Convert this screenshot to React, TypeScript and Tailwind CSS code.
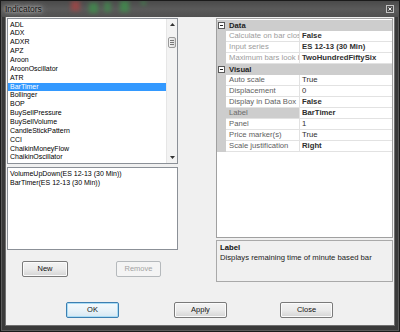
import React from "react";

const indicators = [
  "ADL",
  "ADX",
  "ADXR",
  "APZ",
  "Aroon",
  "AroonOscillator",
  "ATR",
  "BarTimer",
  "Bollinger",
  "BOP",
  "BuySellPressure",
  "BuySellVolume",
  "CandleStickPattern",
  "CCI",
  "ChaikinMoneyFlow",
  "ChaikinOscillator",
];

const applied = ["VolumeUpDown(ES 12-13 (30 Min))", "BarTimer(ES 12-13 (30 Min))"];

type Row =
  | { kind: "cat"; label: string }
  | {
      kind: "prop";
      name: string;
      value: string;
      disabled?: boolean;
      bold?: boolean;
      selected?: boolean;
    };

const rows: Row[] = [
  { kind: "cat", label: "Data" },
  { kind: "prop", name: "Calculate on bar close", value: "False", disabled: true, bold: true },
  { kind: "prop", name: "Input series", value: "ES 12-13 (30 Min)", disabled: true, bold: true },
  { kind: "prop", name: "Maximum bars look back", value: "TwoHundredFiftySix", disabled: true, bold: true },
  { kind: "cat", label: "Visual" },
  { kind: "prop", name: "Auto scale", value: "True" },
  { kind: "prop", name: "Displacement", value: "0" },
  { kind: "prop", name: "Display in Data Box", value: "False", bold: true },
  { kind: "prop", name: "Label", value: "BarTimer", bold: true, selected: true },
  { kind: "prop", name: "Panel", value: "1" },
  { kind: "prop", name: "Price marker(s)", value: "True" },
  { kind: "prop", name: "Scale justification", value: "Right", bold: true },
];

function Btn({ label, variant, w }: { label: string; variant: "normal" | "default" | "disabled"; w: string }) {
  if (variant === "disabled") {
    return (
      <div
        className={`${w} h-[16px] flex items-center justify-center text-[7.5px] rounded-[2px] border border-[#b5b9bc] bg-[#f4f4f4] text-[#a3a3a3]`}
      >
        {label}
      </div>
    );
  }
  if (variant === "default") {
    return (
      <div
        className={`${w} h-[16px] flex items-center justify-center text-[7.5px] rounded-[2px] border border-[#3c7fb1] bg-gradient-to-b from-[#f4fafd] via-[#e9f3f9] to-[#d6e8f3] text-[#111] shadow-[inset_0_0_0_1px_#a9dcf5]`}
      >
        {label}
      </div>
    );
  }
  return (
    <div
      className={`${w} h-[16px] flex items-center justify-center text-[7.5px] rounded-[2px] border border-[#7a7a7a] bg-gradient-to-b from-[#f3f3f3] via-[#ebebeb] to-[#d4d4d4] text-[#111] shadow-[inset_0_0_0_1px_#fbfbfb]`}
    >
      {label}
    </div>
  );
}

function MinusBox() {
  return (
    <svg width="7" height="7" viewBox="0 0 7 7" className="block">
      <rect x="0.5" y="0.5" width="6" height="6" fill="#fff" stroke="#5a5a5a" />
      <line x1="2" y1="3.5" x2="5" y2="3.5" stroke="#222" />
    </svg>
  );
}

export default function App() {
  return (
    <div className="w-[400px] h-[332px] bg-[#3a3a3a] border border-[#1b1b1b] shadow-[inset_0_0_0_1px_#5a5a5a] flex flex-col overflow-hidden font-['Liberation_Sans',Arial,sans-serif]">
      {/* Title bar */}
      <div className="h-[16px] relative flex items-center pl-[4px] pr-[5px] bg-gradient-to-b from-[#4a4a4a] via-[#5a5a5a] to-[#505050]">
        <span className="absolute left-[70px] top-[0px] w-[9px] h-[10px] bg-[#a44444] blur-[2px] opacity-80" />
        <span className="absolute left-[88px] top-[2px] w-[9px] h-[10px] bg-[#3f8f4c] blur-[2px] opacity-80" />
        <span className="absolute left-[103px] top-[1px] w-[7px] h-[10px] bg-[#3f8f4c] blur-[2px] opacity-70" />
        <span className="absolute left-[119px] top-[0px] w-[9px] h-[11px] bg-[#3f8f4c] blur-[2px] opacity-80" />
        <span className="absolute left-[140px] top-[0px] w-[5px] h-[4px] bg-[#3f8f4c] blur-[2px] opacity-70" />
        <span className="relative text-[8.5px] text-[#141414] [text-shadow:0_0_3px_#cfcfcf,0_0_6px_#bdbdbd,0_0_9px_#a8a8a8]">
          Indicators
        </span>
        <div className="ml-auto w-[8px] h-[8px] border border-[#c4c4c4] bg-[#4e4e4e] flex items-center justify-center">
          <svg width="4" height="4" viewBox="0 0 4 4" className="block">
            <path d="M0.5 0.5 L3.5 3.5 M3.5 0.5 L0.5 3.5" stroke="#f0f0f0" strokeWidth="1" />
          </svg>
        </div>
      </div>

      {/* Client */}
      <div className="mx-[5px] mb-[6px] flex-1 bg-[#f0f0f0] shadow-[0_0_0_1px_#707070] pt-[1px] flex flex-col">
        <div className="flex h-[264px] ml-[1px]">
          {/* Left column */}
          <div className="w-[171px] flex flex-col">
            <div className="h-[146px] border border-[#8b9097] bg-white flex">
              <div className="flex-1 pt-[1.5px] text-[7px] leading-[8.87px] text-black overflow-hidden">
                {indicators.map((it) =>
                  it === "BarTimer" ? (
                    <div key={it} className="bg-[#3399ff] text-white pl-[2px] h-[8.87px] whitespace-nowrap">
                      {it}
                    </div>
                  ) : (
                    <div key={it} className="pl-[2px] h-[8.87px] whitespace-nowrap">
                      {it}
                    </div>
                  )
                )}
              </div>
              {/* Scrollbar */}
              <div className="w-[11px] bg-[#f3f3f3] border-l border-[#e6e6e6] flex flex-col items-center">
                <div className="h-[11px] w-full flex items-center justify-center">
                  <svg width="5" height="3" viewBox="0 0 5 3" className="block">
                    <path d="M2.5 0 L5 3 L0 3 Z" fill="#333" />
                  </svg>
                </div>
                <div className="mt-[7px] w-[8px] h-[11px] rounded-[2px] border border-[#9a9a9a] bg-gradient-to-r from-[#f4f4f4] to-[#dcdcdc] flex flex-col items-center justify-center gap-[1px]">
                  <div className="w-[4px] h-px bg-[#777]" />
                  <div className="w-[4px] h-px bg-[#777]" />
                  <div className="w-[4px] h-px bg-[#777]" />
                </div>
                <div className="mt-auto h-[11px] w-full flex items-center justify-center">
                  <svg width="5" height="3" viewBox="0 0 5 3" className="block">
                    <path d="M0 0 L5 0 L2.5 3 Z" fill="#333" />
                  </svg>
                </div>
              </div>
            </div>

            <div className="mt-[3px] h-[83px] border border-[#8b9097] bg-white pt-[1px] text-[7px] leading-[9px] text-black">
              {applied.map((a) => (
                <div key={a} className="pl-[2px] whitespace-nowrap">
                  {a}
                </div>
              ))}
            </div>

            <div className="mt-[11px] flex ml-[15px]">
              <Btn label="New" variant="normal" w="w-[46px]" />
              <div className="ml-[48px]">
                <Btn label="Remove" variant="disabled" w="w-[45px]" />
              </div>
            </div>
          </div>

          {/* Right column */}
          <div className="ml-[38px] w-[177px] flex flex-col">
            <div className="h-[220px] border border-[#a0a0a0] bg-white pt-[1px] text-[7.7px]">
              {rows.map((r, i) =>
                r.kind === "cat" ? (
                  <div key={i} className="h-[11px] flex items-center bg-[#cdcdcd]">
                    <div className="w-[9px] flex items-center pl-[1px]">
                      <MinusBox />
                    </div>
                    <span className="pl-[3px] font-bold text-[#1e1e1e] leading-none">{r.label}</span>
                  </div>
                ) : (
                  <div key={i} className="h-[11px] flex">
                    <div className="w-[9px] bg-[#cdcdcd]" />
                    <div
                      className={
                        r.selected
                          ? "w-[73px] bg-[#cdcdcd] border-b border-[#e2e2e2] pl-[3px] flex items-center overflow-hidden whitespace-nowrap text-[#6a6a6a]"
                          : r.disabled
                          ? "w-[73px] bg-white border-b border-[#e2e2e2] pl-[3px] flex items-center overflow-hidden whitespace-nowrap text-[#9c9c9c]"
                          : "w-[73px] bg-white border-b border-[#e2e2e2] pl-[3px] flex items-center overflow-hidden whitespace-nowrap text-[#5e5e5e]"
                      }
                    >
                      {r.name}
                    </div>
                    <div
                      className={
                        r.bold
                          ? "flex-1 border-l border-b border-[#e2e2e2] pl-[2px] flex items-center whitespace-nowrap overflow-hidden font-bold text-[#2e2e2e]"
                          : "flex-1 border-l border-b border-[#e2e2e2] pl-[2px] flex items-center whitespace-nowrap overflow-hidden text-[#2e2e2e]"
                      }
                    >
                      {r.value}
                    </div>
                  </div>
                )
              )}
            </div>
            <div className="mt-[2px] h-[42px] border border-[#a9a9a9] bg-[#f0f0f0] pl-[3px] pt-[2px] text-[7.7px] leading-[10px]">
              <div className="font-bold text-[#111]">Label</div>
              <div className="text-[#222]">Displays remaining time of minute based bar</div>
            </div>
          </div>
        </div>

        {/* Bottom buttons */}
        <div className="mt-[20px] ml-[60px] flex">
          <Btn label="OK" variant="default" w="w-[53px]" />
          <div className="ml-[55px]">
            <Btn label="Apply" variant="normal" w="w-[53px]" />
          </div>
          <div className="ml-[53px]">
            <Btn label="Close" variant="normal" w="w-[53px]" />
          </div>
        </div>
      </div>
    </div>
  );
}
